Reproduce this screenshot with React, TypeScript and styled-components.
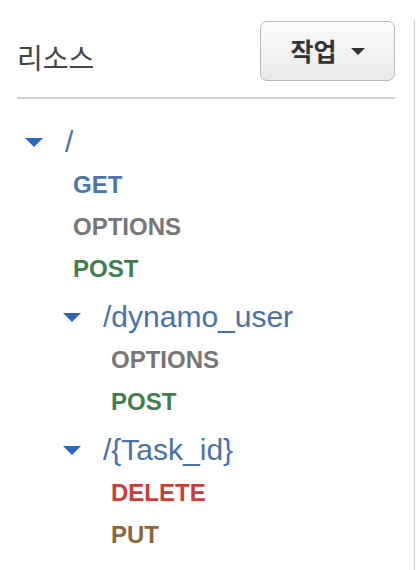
import React from "react";
import styled, { createGlobalStyle } from "styled-components";

const GlobalStyle = createGlobalStyle`
  html, body {
    margin: 0;
    padding: 0;
    background: #ffffff;
    font-family: "Liberation Sans", "Noto Sans CJK KR", Arial, sans-serif;
  }
`;

const Page = styled.div`
  display: flex;
  width: 416px;
  height: 570px;
  overflow: hidden;
  background: #ffffff;
`;

const Panel = styled.div`
  width: 378px;
  padding: 21px 19px 0 17px;
  display: flex;
  flex-direction: column;
`;

const SideRule = styled.div`
  width: 1px;
  margin-top: 20px;
  background: #cfcfcf;
  flex: none;
`;

const Header = styled.div`
  display: flex;
  justify-content: space-between;
  align-items: flex-end;
  height: 60px;
`;

const Title = styled.h2`
  margin: 0 0 8px 0;
  font-family: "Noto Sans CJK KR", "Liberation Sans", sans-serif;
  font-size: 28px;
  line-height: 32px;
  font-weight: 400;
  color: #444444;
`;

const ActionButton = styled.button`
  width: 135px;
  height: 60px;
  box-sizing: border-box;
  display: flex;
  align-items: center;
  justify-content: center;
  gap: 14px;
  padding: 0 0 2px 0;
  border: 1px solid #b9b9b9;
  border-radius: 7px;
  background: linear-gradient(#fbfbfb, #e9e9e9);
  box-shadow: inset 0 1px 0 #ffffff;
  font-family: "Noto Sans CJK KR", "Liberation Sans", sans-serif;
  font-size: 25px;
  font-weight: 700;
  color: #333333;
  cursor: pointer;
`;

const Caret = styled.span`
  width: 0;
  height: 0;
  border-left: 7px solid transparent;
  border-right: 7px solid transparent;
  border-top: 7px solid #333333;
  margin-top: 3px;
`;

const Divider = styled.hr`
  margin: 16px 0 0 0;
  border: none;
  height: 2px;
  background: #d0d0d0;
`;

const Tree = styled.div`
  margin-top: 21px;
  display: flex;
  flex-direction: column;
`;

const NodeBox = styled.div<{ $depth: number }>`
  display: flex;
  flex-direction: column;
  padding-left: ${(p) => p.$depth * 38}px;
  margin-top: ${(p) => (p.$depth > 0 ? 5 : 0)}px;
`;

const PathRow = styled.div`
  display: flex;
  align-items: center;
  height: 44px;
`;

const Toggle = styled.span`
  width: 0;
  height: 0;
  margin-left: 8px;
  margin-right: 22px;
  border-left: 9px solid transparent;
  border-right: 9px solid transparent;
  border-top: 9px solid #2d66b8;
  flex: none;
`;

const PathText = styled.span`
  font-family: "Liberation Sans", Arial, sans-serif;
  font-size: 30px;
  color: #4a71a7;
  line-height: 1;
`;

const methodColors: Record<string, string> = {
  GET: "#4d75a9",
  OPTIONS: "#767676",
  POST: "#3f7d4e",
  DELETE: "#c93f3b",
  PUT: "#876840",
};

const MethodRow = styled.div<{ $method: string }>`
  display: flex;
  align-items: center;
  height: 42px;
  padding-left: 56px;
  font-family: "Liberation Sans", Arial, sans-serif;
  font-size: 24px;
  font-weight: 700;
  color: ${(p) => methodColors[p.$method] || "#767676"};
`;

type Resource = {
  path: string;
  methods: string[];
  children?: Resource[];
};

const resources: Resource = {
  path: "/",
  methods: ["GET", "OPTIONS", "POST"],
  children: [
    { path: "/dynamo_user", methods: ["OPTIONS", "POST"] },
    { path: "/{Task_id}", methods: ["DELETE", "PUT"] },
  ],
};

const Node: React.FC<{ node: Resource; depth: number }> = ({ node, depth }) => (
  <>
    <NodeBox $depth={depth}>
      <PathRow>
        <Toggle />
        <PathText>{node.path}</PathText>
      </PathRow>
      {node.methods.map((m) => (
        <MethodRow key={m} $method={m}>
          {m}
        </MethodRow>
      ))}
    </NodeBox>
    {node.children?.map((c) => (
      <Node key={c.path} node={c} depth={depth + 1} />
    ))}
  </>
);

export default function App() {
  return (
    <>
      <GlobalStyle />
      <Page>
        <Panel>
          <Header>
            <Title>리소스</Title>
            <ActionButton>
              작업
              <Caret />
            </ActionButton>
          </Header>
          <Divider />
          <Tree>
            <Node node={resources} depth={0} />
          </Tree>
        </Panel>
        <SideRule />
      </Page>
    </>
  );
}
